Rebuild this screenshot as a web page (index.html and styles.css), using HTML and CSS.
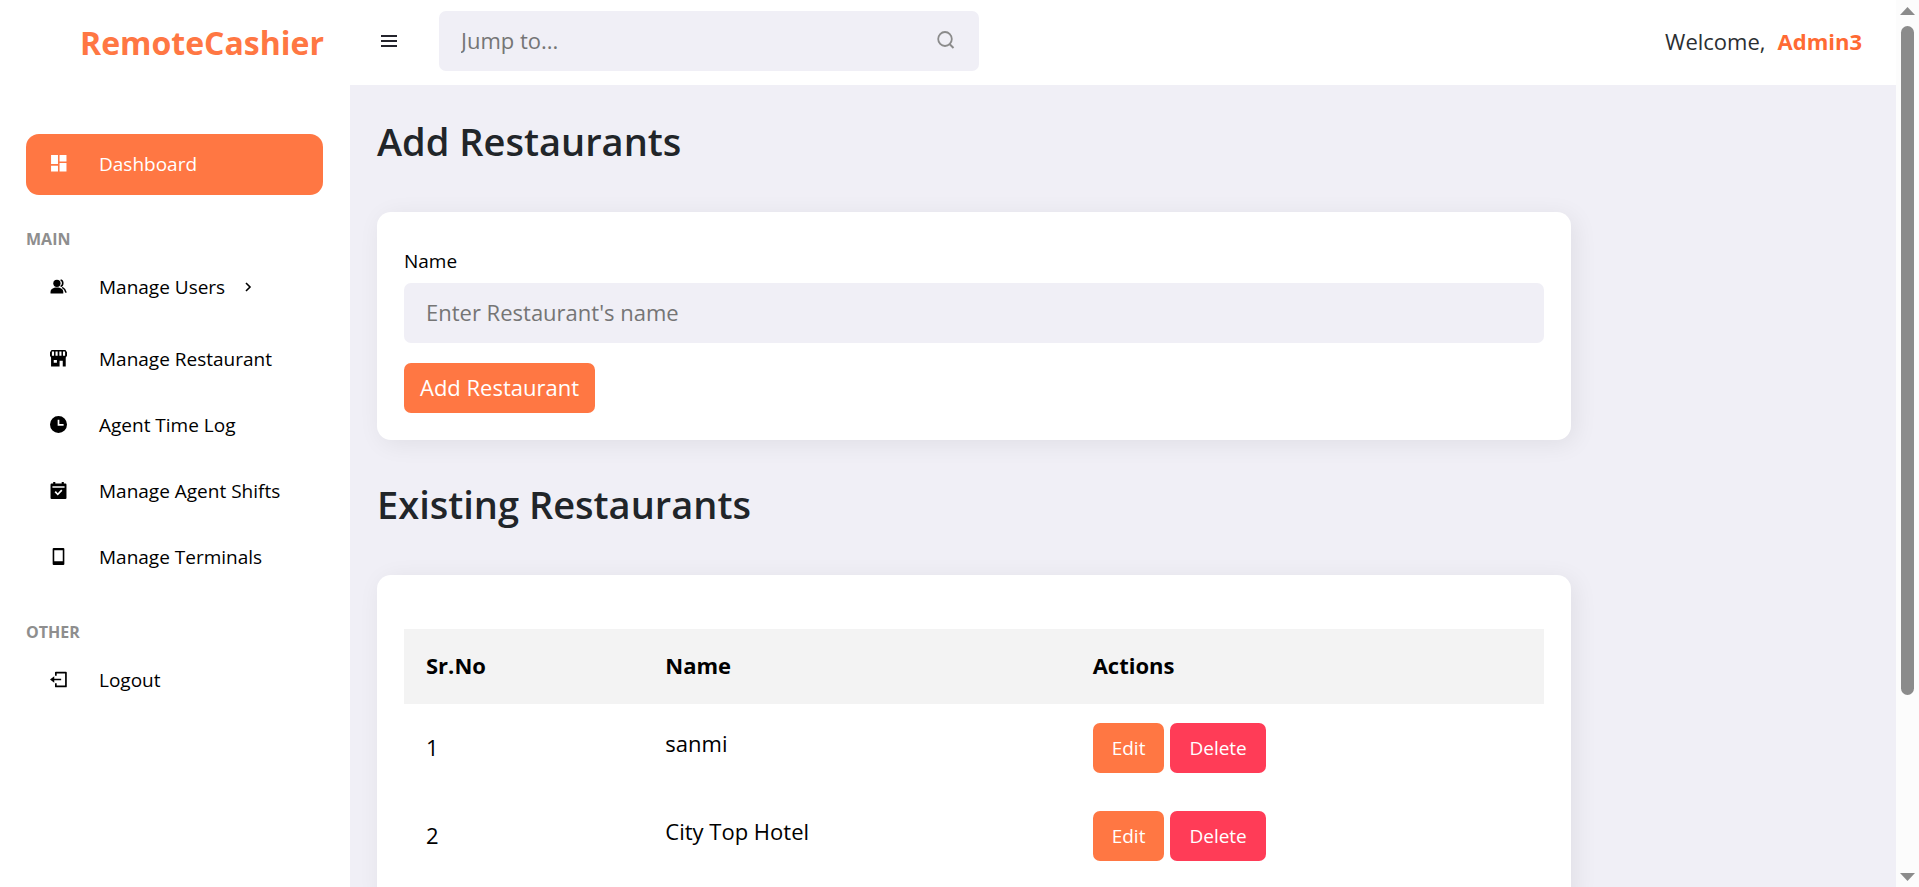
FILE: index.html
```html
<!DOCTYPE html>
<html lang="en">
<head>
<meta charset="utf-8">
<title>RemoteCashier</title>
<link rel="stylesheet" href="styles.css">
</head>
<body>
<div class="shell">
  <aside class="sidebar">
    <div class="brand">RemoteCashier</div>
    <nav class="nav">
      <a class="nav-link active" href="#">
        <svg class="icon" viewBox="0 0 16 16"><path d="M1 0h6.500v8.500H1zM9 0h6.500v6H9zM1 10h6.500v5.500H1zM9 7.500h6.500v8H9z"/></svg>
        <span>Dashboard</span>
      </a>
      <h2 class="nav-title">Main</h2>
      <a class="nav-link has-sub" href="#">
        <svg class="icon" viewBox="0 0 16 16"><circle cx="6.500" cy="5" r="3.400"/><path d="M.5 14.500v-1.200C.5 10.500 3 9 6.500 9s6 1.500 6 4.300v1.200z"/><path d="M10 1.800c2.700.6 2.700 5.200 0 6.200M11.500 8.800c2 1 3 2.500 3.600 5" fill="none" stroke="currentColor" stroke-width="1.500"/></svg>
        <span>Manage Users</span>
        <svg class="chevron" viewBox="0 0 10 10"><path d="M3 1l4 4-4 4" fill="none" stroke="currentColor" stroke-width="1.600"/></svg>
      </a>
      <a class="nav-link" href="#">
        <svg class="icon" viewBox="0 0 16 16"><path fill-rule="evenodd" d="M1.500 0h13L16 2v3.500L14.800 7v8.500H12V10H9v5.500H1V7L0 5.500V2zM1.800 1.500v4h2v-4zM5.200 1.500v4h2v-4zM8.800 1.500v4h2v-4zM12.200 1.500v4h2v-4zM3.500 9.500V12h3V9.500z"/></svg>
        <span>Manage Restaurant</span>
      </a>
      <a class="nav-link" href="#">
        <svg class="icon" viewBox="0 0 16 16"><path fill-rule="evenodd" d="M8 0a8 8 0 1 0 0 16A8 8 0 0 0 8 0zM7.200 3.500h1.600v4h4v1.600H7.200z"/></svg>
        <span>Agent Time Log</span>
      </a>
      <a class="nav-link" href="#">
        <svg class="icon" viewBox="0 0 16 16"><path fill-rule="evenodd" d="M3 0h2v1.500h6V0h2v1.500h1.500q1 0 1 1V15q0 1-1 1h-13q-1 0-1-1V2.500q0-1 1-1H3zM2.300 4v1.500h11.400V4zM4.300 9.600l3 3.200 4.400-4.600-1.200-1.100-3.200 3.400-1.800-2z"/></svg>
        <span>Manage Agent Shifts</span>
      </a>
      <a class="nav-link" href="#">
        <svg class="icon" viewBox="0 0 16 16"><path fill-rule="evenodd" d="M3.500 0h9q1 0 1 1v14q0 1-1 1h-9q-1 0-1-1V1q0-1 1-1zM4 2v10.500h8V2z"/></svg>
        <span>Manage Terminals</span>
      </a>
      <h2 class="nav-title other">Other</h2>
      <a class="nav-link" href="#">
        <svg class="icon" viewBox="0 0 16 16"><path d="M5.500 4.500V1.500h9.500v13H5.500v-3" fill="none" stroke="currentColor" stroke-width="1.600" stroke-linejoin="round"/><path d="M0 8l4-3v2.300h6.500v1.400H4V11z"/></svg>
        <span>Logout</span>
      </a>
    </nav>
  </aside>

  <div class="page">
    <header class="topbar">
      <button class="menu" type="button" aria-label="Toggle menu">
        <svg viewBox="0 0 16 12"><path d="M0 0h16v2H0zM0 5h16v2H0zM0 10h16v2H0z"/></svg>
      </button>
      <form class="search">
        <input class="search-input" type="text" placeholder="Jump to..." aria-label="Jump to">
        <button class="search-button" type="button" aria-label="Search">
          <svg viewBox="0 0 18 18"><ellipse cx="8" cy="8" rx="6.800" ry="7" fill="none" stroke="currentColor" stroke-width="1.800"/><path d="M12.500 13l4 4" stroke="currentColor" stroke-width="2"/></svg>
        </button>
      </form>
      <p class="welcome">Welcome, <strong>Admin3</strong></p>
    </header>

    <main class="content">
      <h1 class="heading">Add Restaurants</h1>
      <form class="card">
        <label class="label" for="name">Name</label>
        <input class="field" id="name" type="text" placeholder="Enter Restaurant's name">
        <button class="btn btn-large" type="button">Add Restaurant</button>
      </form>

      <h1 class="heading">Existing Restaurants</h1>
      <section class="card list">
        <table class="table">
          <thead>
            <tr><th class="col-no">Sr.No</th><th class="col-name">Name</th><th>Actions</th></tr>
          </thead>
          <tbody>
            <tr>
              <td class="number">1</td>
              <td class="name">sanmi</td>
              <td><div class="actions"><button class="btn" type="button">Edit</button><button class="btn danger" type="button">Delete</button></div></td>
            </tr>
            <tr>
              <td class="number">2</td>
              <td class="name">City Top Hotel</td>
              <td><div class="actions"><button class="btn" type="button">Edit</button><button class="btn danger" type="button">Delete</button></div></td>
            </tr>
          </tbody>
        </table>
      </section>
    </main>
  </div>

  <div class="scrollbar" aria-hidden="true">
    <svg class="arrow" viewBox="0 0 15 8"><path d="M0 8L7.500 0 15 8z"/></svg>
    <div class="track"><div class="thumb"></div></div>
    <svg class="arrow" viewBox="0 0 15 8"><path d="M0 0h15L7.500 8z"/></svg>
  </div>
</div>
</body>
</html>
```

FILE: styles.css
```css
:root {
  --orange: #ff7743;
  --red: #ff3c57;
  --surface: #f0eff6;
}

* {
  box-sizing: border-box;
}

body,
h1,
h2,
p {
  margin: 0;
}

body {
  font-family: "Open Sans", "Noto Sans", sans-serif;
  font-size: 22px;
  color: #000;
  background: var(--surface);
}

button,
input {
  font: inherit;
  border: 0;
}

svg {
  display: block;
  fill: currentColor;
}

.shell {
  display: grid;
  grid-template-columns: 350px 1fr 23px;
  height: 100vh;
  overflow: hidden;
}

.sidebar {
  padding: 20px 27px 0 26px;
  background: #fff;
}

.brand {
  padding-left: 54px;
  font-size: 32px;
  line-height: 46px;
  font-weight: 700;
  color: var(--orange);
}

.nav {
  display: flex;
  flex-direction: column;
  gap: 5px;
  padding-top: 68px;
}

.nav-link {
  display: flex;
  align-items: center;
  height: 61px;
  padding: 0 0 2px 24px;
  border-radius: 13px;
  font-size: 19px;
  color: #000;
  text-decoration: none;
}

.nav-link.active {
  background: var(--orange);
  color: #fff;
}

.nav-link.has-sub {
  margin-bottom: 6px;
}

.icon {
  width: 17px;
  height: 17px;
  margin-right: 32px;
}

.chevron {
  width: 10px;
  height: 10px;
  margin-left: 18px;
}

.nav-title {
  padding: 27px 0 1px;
  font-size: 16px;
  line-height: 24px;
  font-weight: 700;
  text-transform: uppercase;
  color: #8e8e8e;
}

.page {
  display: flex;
  flex-direction: column;
  min-width: 0;
  overflow: hidden;
}

.topbar {
  display: flex;
  align-items: center;
  flex: none;
  height: 85px;
  padding: 0 34px 3px 31px;
  background: #fff;
}

.menu {
  width: 16px;
  margin-right: 42px;
  padding: 0;
  background: none;
  color: #24242c;
}

.search {
  display: flex;
  width: 540px;
  height: 60px;
  border-radius: 7px;
  background: var(--surface);
}

.search-input {
  flex: 1;
  min-width: 0;
  padding: 0 22px 2px;
  background: none;
}

.search-button {
  width: 42px;
  padding: 0 24px 2px 0;
  background: none;
  color: #8b8b8b;
}

.search-input::placeholder,
.field::placeholder {
  color: #757575;
}

.welcome {
  display: flex;
  gap: 12px;
  margin-left: auto;
  font-weight: 500;
  color: #2b2f32;
}

.welcome strong {
  font-weight: 700;
  color: #ff6a33;
}

.content {
  padding: 27px;
}

.heading {
  margin-bottom: 42px;
  font-size: 38px;
  line-height: 58px;
  font-weight: 600;
  color: #212529;
}

.card {
  display: flex;
  flex-direction: column;
  align-items: flex-start;
  width: 80%;
  margin-bottom: 35px;
  padding: 27px;
  border-radius: 14px;
  background: #fff;
  box-shadow: 4px 4px 24px rgba(0, 0, 0, 0.07);
}

.label {
  padding: 8px 0;
  font-size: 19px;
  line-height: 28px;
  font-weight: 500;
}

.field {
  width: 100%;
  height: 60px;
  margin-bottom: 20px;
  padding: 0 22px 2px;
  border-radius: 7px;
  background: var(--surface);
}

.btn {
  height: 50px;
  padding: 0 19px;
  border-radius: 7px;
  font-size: 19px;
  background: var(--orange);
  color: #fff;
}

.btn-large {
  padding: 0 16px 2px;
  font-size: 22px;
}

.btn.danger {
  background: var(--red);
}

.list {
  padding-top: 54px;
}

.table {
  width: 100%;
  table-layout: fixed;
  border-collapse: collapse;
}

.table th,
.table td {
  padding: 0 22px;
  text-align: left;
}

.table th {
  height: 75px;
  padding-bottom: 4px;
  background: #f3f3f3;
}

.table td {
  height: 88px;
}

.table .number {
  padding-bottom: 2px;
}

.table .name {
  padding-bottom: 10px;
}

.table .col-no {
  width: 21%;
}

.table .col-name {
  width: 37.5%;
}

.actions {
  display: flex;
  gap: 6px;
}

.scrollbar {
  display: flex;
  flex-direction: column;
  align-items: center;
  padding: 7px 0 6px;
  background: #fcfcfc;
  color: #8b8b8b;
}

.arrow {
  width: 15px;
  height: 8px;
}

.track {
  flex: 1;
  padding: 11px 0;
}

.thumb {
  width: 13px;
  height: 80%;
  border-radius: 7px;
  background: #8b8b8b;
}
```
